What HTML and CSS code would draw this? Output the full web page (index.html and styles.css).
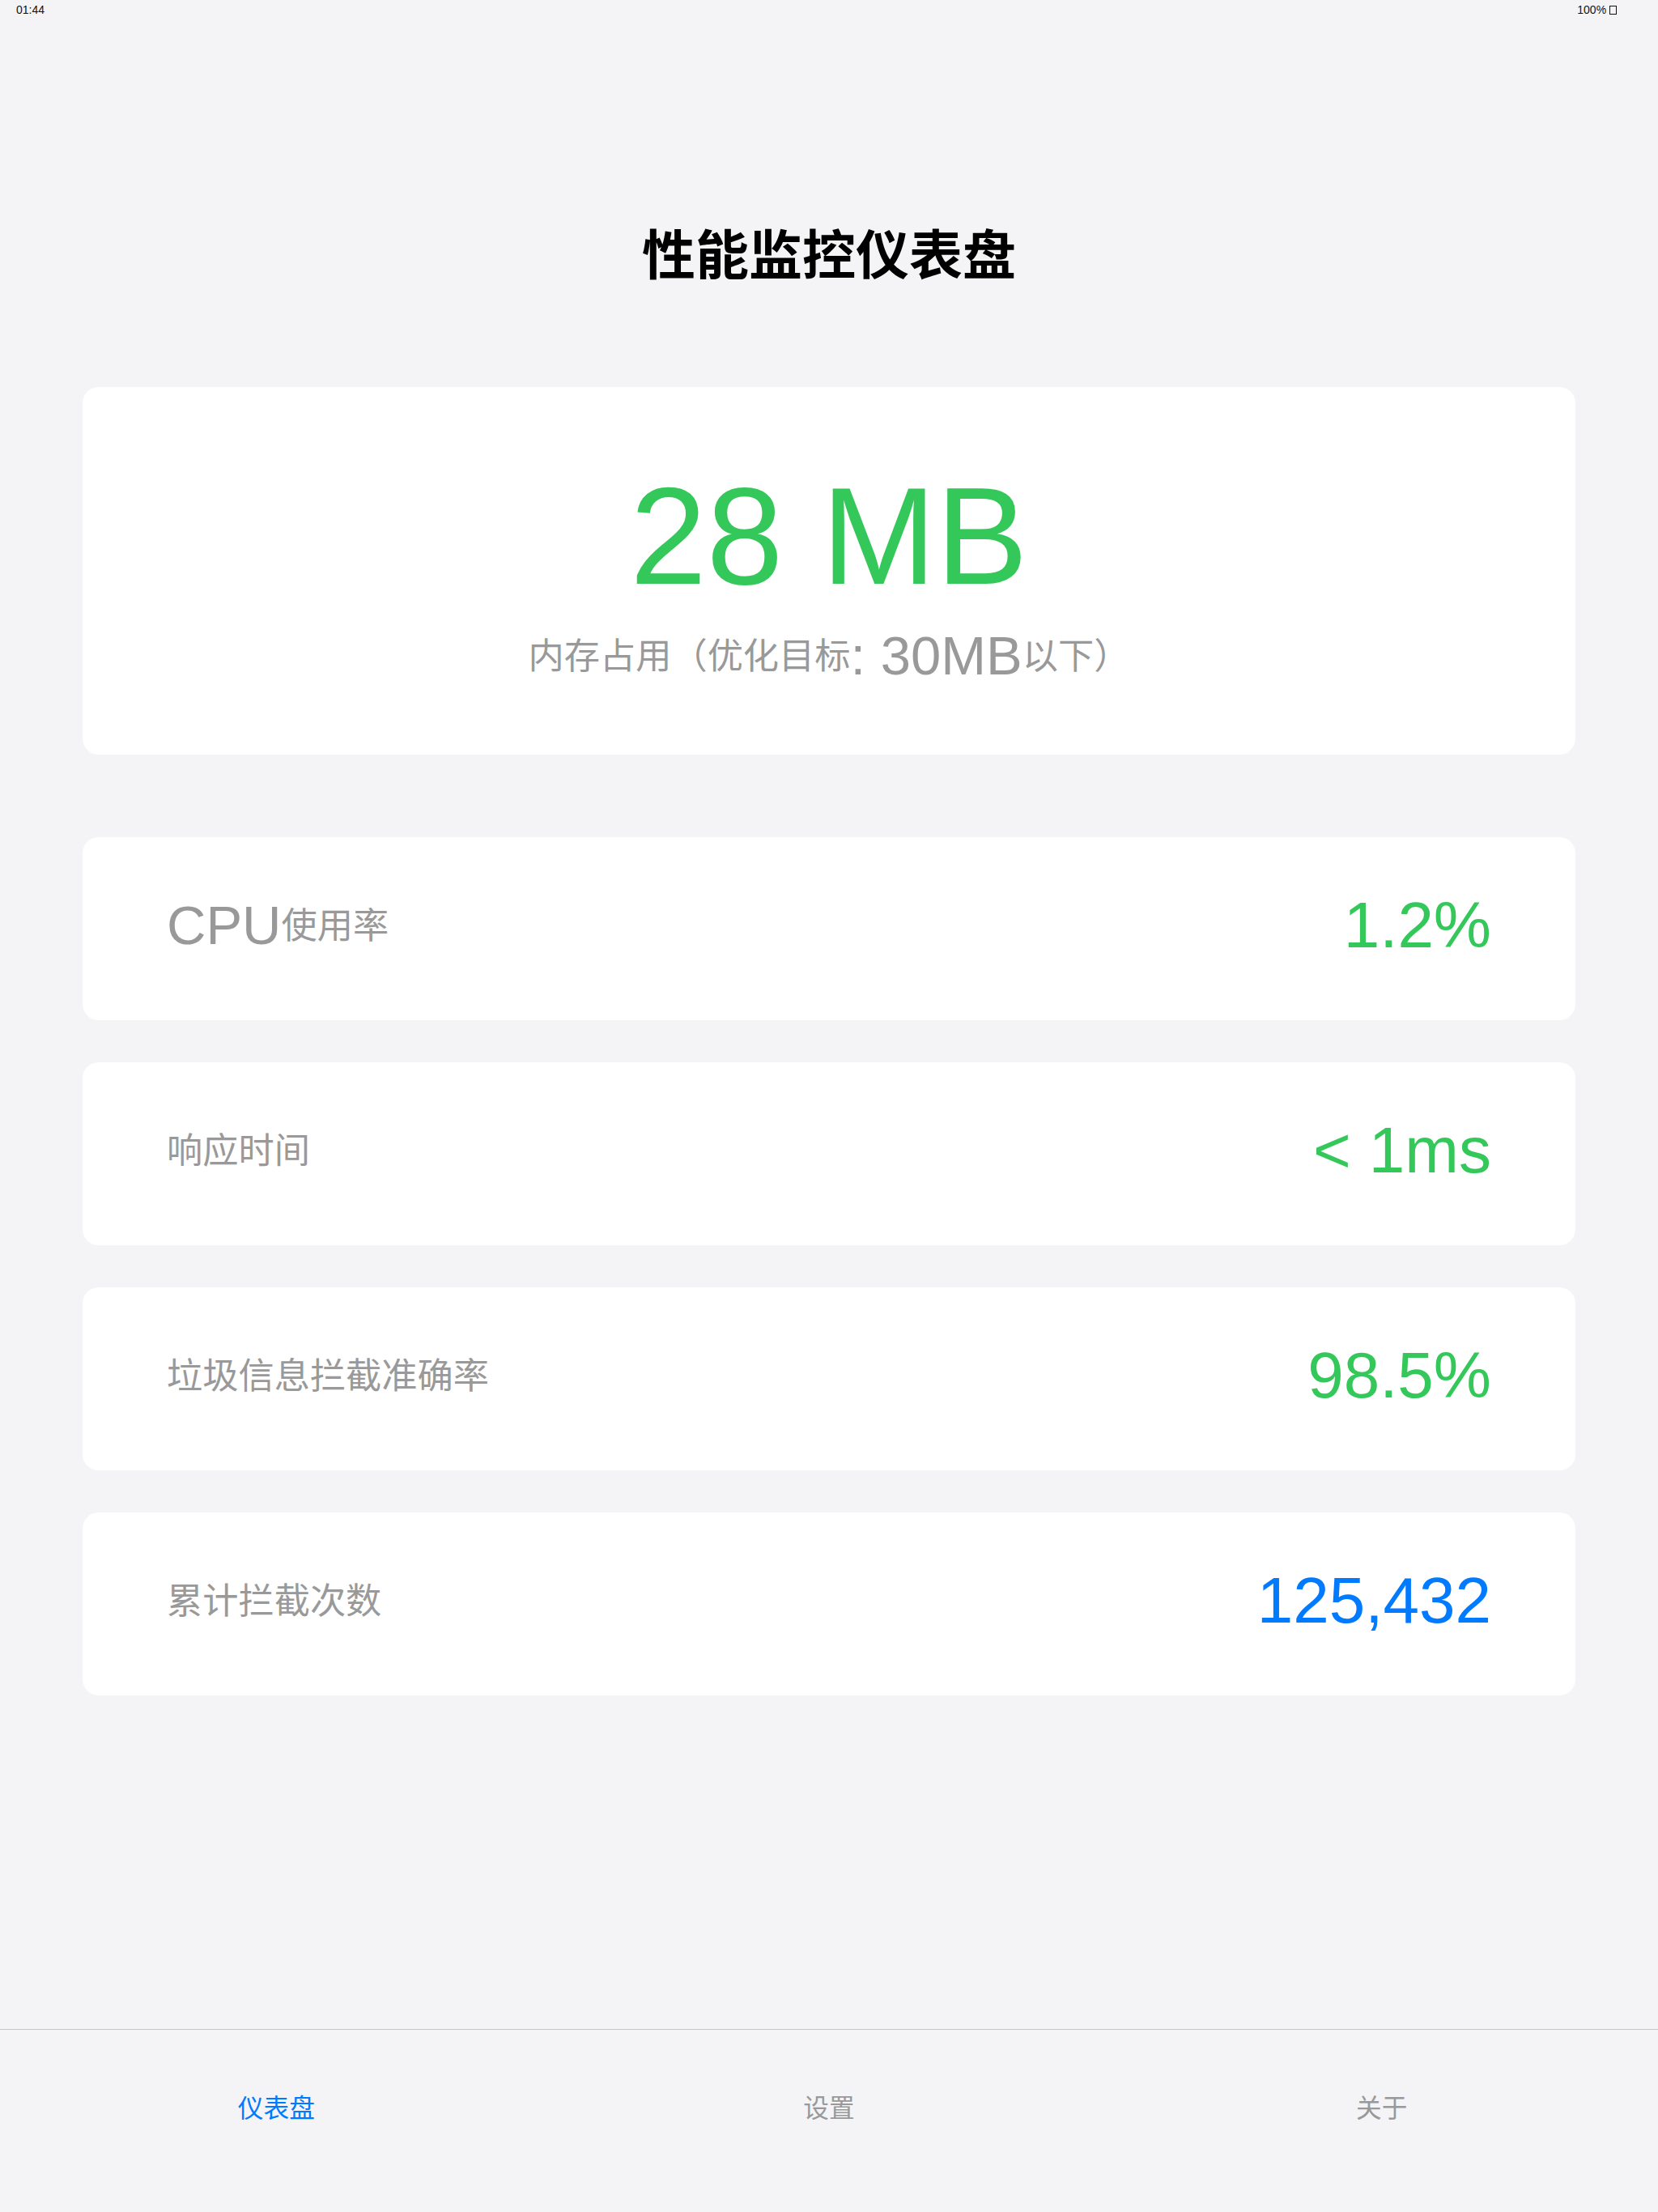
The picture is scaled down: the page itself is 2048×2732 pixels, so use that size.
FILE: index.html
```html
<!DOCTYPE html>
<html lang="zh-CN">
<head>
<meta charset="utf-8">
<title>性能监控仪表盘</title>
<link rel="stylesheet" href="styles.css">
</head>
<body>
  <div class="status">
    <span>01:44</span>
    <span>100% <span class="batt"></span></span>
  </div>
  <main class="main">
    <h1 class="title"><span class="zh">性能监控仪表盘</span></h1>
    <section class="hero">
      <div class="hero-value">28 MB</div>
      <div class="hero-sub"><span class="zh">内存占用（优化目标</span>: 30MB<span class="zh">以下）</span></div>
    </section>
    <section class="rows">
      <div class="row">
        <div class="label">CPU<span class="zh">使用率</span></div>
        <div class="value green">1.2%</div>
      </div>
      <div class="row">
        <div class="label"><span class="zh">响应时间</span></div>
        <div class="value green">&lt; 1ms</div>
      </div>
      <div class="row">
        <div class="label"><span class="zh">垃圾信息拦截准确率</span></div>
        <div class="value green">98.5%</div>
      </div>
      <div class="row">
        <div class="label"><span class="zh">累计拦截次数</span></div>
        <div class="value blue">125,432</div>
      </div>
    </section>
  </main>
  <nav class="tabbar">
    <div class="tab active"><span class="zh">仪表盘</span></div>
    <div class="tab"><span class="zh">设置</span></div>
    <div class="tab"><span class="zh">关于</span></div>
  </nav>
</body>
</html>
```
FILE: styles.css
```css
html, body {
  margin: 0;
  padding: 0;
}
body {
  width: 2048px;
  height: 2732px;
  overflow: hidden;
  background: #f4f4f6;
  font-family: "Liberation Sans", "Noto Sans CJK SC", sans-serif;
  color: #000;
  display: flex;
  flex-direction: column;
}
.zh {
  font-family: "Noto Sans CJK SC", "Liberation Sans", sans-serif;
  font-size: 0.66em;
  line-height: 1;
  vertical-align: 0.16em;
}
.status {
  height: 24px;
  line-height: 24px;
  font-size: 14px;
  color: #111;
  display: flex;
  justify-content: space-between;
  padding: 0 51px 0 20px;
}
.batt {
  display: inline-block;
  width: 7px;
  height: 9px;
  border: 1.5px solid #111;
  vertical-align: -1px;
}
.main {
  flex: 1;
  padding: 0 102px;
  display: flex;
  flex-direction: column;
}
.title {
  margin: 241px 0 0;
  font-size: 100px;
  line-height: 100px;
  font-weight: 700;
  text-align: center;
}
.title .zh {
  font-weight: 700;
}
.hero {
  margin-top: 113px;
  background: #fff;
  border-radius: 20px;
  padding: 99px 0 82px;
  text-align: center;
}
.hero-value {
  font-size: 170px;
  line-height: 170px;
  color: #34c759;
}
.hero-sub {
  margin-top: 23px;
  font-size: 67px;
  line-height: 80px;
  color: #999;
}
.rows {
  margin-top: 102px;
  display: flex;
  flex-direction: column;
  gap: 52px;
}
.row {
  background: #fff;
  border-radius: 20px;
  padding: 60px 104px 68px;
  display: flex;
  justify-content: space-between;
  align-items: center;
}
.label {
  font-size: 67px;
  line-height: 98px;
  color: #999;
}
.value {
  font-size: 80px;
  line-height: 98px;
}
.green { color: #34c759; }
.blue { color: #007aff; }
.tabbar {
  height: 226px;
  border-top: 1px solid #c6c6c8;
  background: #f4f4f6;
  display: flex;
  padding-top: 67px;
  box-sizing: border-box;
}
.tab {
  flex: 1;
  text-align: center;
  font-size: 48px;
  line-height: 60px;
  color: #999;
}
.tab.active {
  color: #007aff;
}
```
